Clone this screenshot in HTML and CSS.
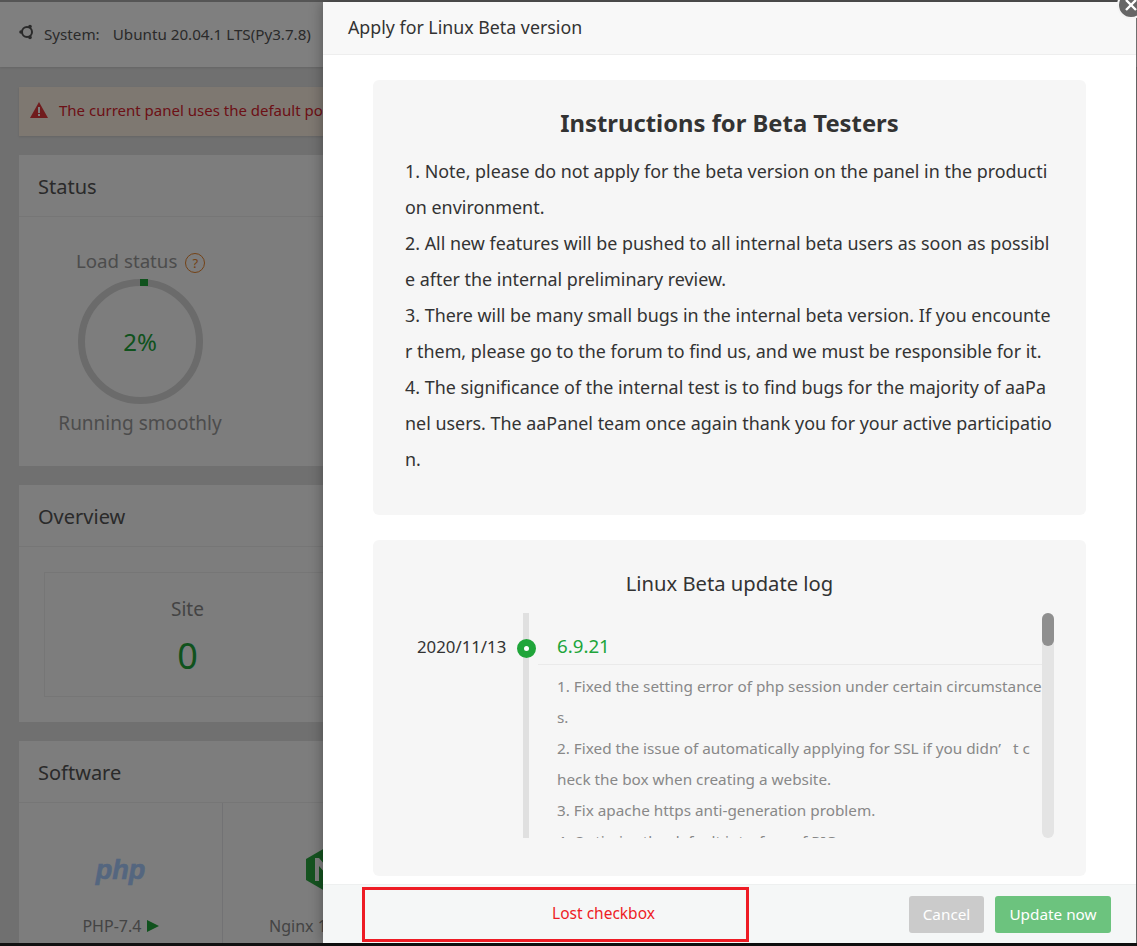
FILE: index.html
```html
<!DOCTYPE html>
<html lang="en">
<head>
    <meta charset="UTF-8">
    <meta name="viewport" content="width=device-width, initial-scale=1.0">
    <title>Apply for Linux Beta version</title>
    <link rel="stylesheet" href="styles.css">
</head>

<body>
    <div class="top-strip"></div>

    <div class="page">
        <div class="sys-bar">
            <svg class="ubuntu-icon" width="16" height="16" viewBox="0 0 16 16">
                <circle cx="8" cy="8" r="5" fill="none" stroke="#555" stroke-width="2"></circle>
                <circle cx="2" cy="8" r="1.8" fill="#555"></circle>
                <circle cx="11" cy="2.6" r="1.8" fill="#555"></circle>
                <circle cx="11" cy="13.4" r="1.8" fill="#555"></circle>
            </svg>
            <span class="sys-label">System:</span>
            <span>Ubuntu 20.04.1 LTS(Py3.7.8)</span>
        </div>

        <div class="content">
            <div class="alert">
                <svg width="18" height="16" viewBox="0 0 18 16">
                    <path d="M9 0 L18 16 L0 16 Z" fill="#e0383a"></path>
                    <rect x="8" y="5" width="2" height="6" fill="#fff"></rect>
                    <rect x="8" y="12" width="2" height="2" fill="#fff"></rect>
                </svg>
                <span>The current panel uses the default port 8888, please change it for security reasons</span>
            </div>

            <div class="card">
                <div class="card-title">Status</div>
                <div class="status-body">
                    <div class="load-col">
                        <div class="load-label">Load status <span class="help">?</span></div>
                        <div class="ring">
                            <svg width="125" height="125" viewBox="0 0 125 125">
                                <circle cx="62.5" cy="62.5" r="59" fill="none" stroke="#d6d6d6" stroke-width="7"></circle>
                                <rect x="62" y="0" width="8" height="7" fill="#20a53a"></rect>
                            </svg>
                            <span class="ring-value">2%</span>
                        </div>
                        <div class="load-state">Running smoothly</div>
                    </div>
                </div>
            </div>

            <div class="card">
                <div class="card-title">Overview</div>
                <div class="overview-body">
                    <div class="overview-box">
                        <div class="overview-name">Site</div>
                        <div class="overview-num">0</div>
                    </div>
                </div>
            </div>

            <div class="card">
                <div class="card-title">Software</div>
                <div class="soft-list">
                    <div class="soft-item">
                        <div class="soft-logo"><span class="php-logo">php</span></div>
                        <div class="soft-name">PHP-7.4 <span class="soft-run"></span></div>
                    </div>
                    <div class="soft-item">
                        <div class="soft-logo">
                            <svg width="38" height="43" viewBox="0 0 38 43">
                                <path d="M19 0 L38 11 L38 32 L19 43 L0 32 L0 11 Z" fill="#2aa640"></path>
                                <path d="M9 33 V10 H13 L26 25 V10 H30 V33 H26 L13 18 V33 Z" fill="#fff"></path>
                            </svg>
                        </div>
                        <div class="soft-name">Nginx 1.18.0 <span class="soft-run"></span></div>
                    </div>
                </div>
            </div>
        </div>

        <div class="overlay"></div>
    </div>

    <div class="bottom-strip"></div>

    <div class="modal">
        <div class="modal-title">Apply for Linux Beta version</div>

        <div class="modal-body">
            <div class="notice">
                <h2>Instructions for Beta Testers</h2>
                <p>
                    1. Note, please do not apply for the beta version on the panel in the producti<br>
                    on environment.<br>
                    2. All new features will be pushed to all internal beta users as soon as possibl<br>
                    e after the internal preliminary review.<br>
                    3. There will be many small bugs in the internal beta version. If you encounte<br>
                    r them, please go to the forum to find us, and we must be responsible for it.<br>
                    4. The significance of the internal test is to find bugs for the majority of aaPa<br>
                    nel users. The aaPanel team once again thank you for your active participatio<br>
                    n.
                </p>
            </div>

            <div class="update-log">
                <div class="log-title">Linux Beta update log</div>
                <div class="timeline">
                    <div class="log-date">2020/11/13</div>
                    <div class="log-line"><span class="log-dot"></span></div>
                    <div class="log-entry">
                        <div class="log-version">6.9.21</div>
                        <div class="log-text">
                            1. Fixed the setting error of php session under certain circumstance<br>
                            s.<br>
                            2. Fixed the issue of automatically applying for SSL if you didn’&nbsp;&nbsp; t c<br>
                            heck the box when creating a website.<br>
                            3. Fix apache https anti-generation problem.<br>
                            4. Optimize the default interface of PIC
                        </div>
                    </div>
                    <div class="log-scroll"><div class="log-thumb"></div></div>
                </div>
            </div>
        </div>

        <div class="modal-foot">
            <div class="lost-box">Lost checkbox</div>
            <div class="foot-buttons">
                <button type="button" class="btn btn-cancel">Cancel</button>
                <button type="button" class="btn btn-update">Update now</button>
            </div>
        </div>
    </div>

    <div class="modal-close">
        <svg width="12" height="12" viewBox="0 0 12 12">
            <path d="M1 1 L11 11 M11 1 L1 11" stroke="#fff" stroke-width="2.4"></path>
        </svg>
    </div>
</body>
</html>
```

FILE: styles.css
```css
body {
    font-family: "Noto Sans", Arial, sans-serif;
    margin: 0;
    width: 1137px;
    height: 946px;
    overflow: hidden;
    position: relative;
    display: flex;
    flex-direction: column;
    background-color: #000;
}

.top-strip {
    height: 2px;
    background-color: #555;
}

.bottom-strip {
    height: 3px;
    background-color: #111;
}

/* page behind the dialog */
.page {
    flex: 1;
    position: relative;
    overflow: hidden;
    background-color: #e0e0e0;
    color: #666;
}

.overlay {
    position: absolute;
    inset: 0;
    background-color: rgba(0, 0, 0, 0.5);
}

.sys-bar {
    height: 65px;
    box-sizing: border-box;
    padding-left: 19px;
    padding-bottom: 1px;
    display: flex;
    align-items: center;
    background-color: #fff;
    box-shadow: 0 1px 2px rgba(0, 0, 0, 0.1);
    font-size: 15.2px;
    color: #555;
}

.ubuntu-icon {
    margin-right: 9px;
    margin-top: -4px;
}

.sys-label {
    margin-right: 13px;
}

.content {
    padding: 20px 19px;
    width: 1099px;
}

.alert {
    height: 49px;
    box-sizing: border-box;
    padding-left: 11px;
    padding-bottom: 3px;
    margin-bottom: 19px;
    display: flex;
    align-items: center;
    gap: 11px;
    background-color: #fdf0e3;
    color: #d9232d;
    font-size: 15px;
    white-space: nowrap;
    box-shadow: 0 1px 2px rgba(0, 0, 0, 0.1);
}

.card {
    background-color: #fafafa;
    margin-bottom: 19px;
}

.card-title {
    height: 62px;
    box-sizing: border-box;
    padding-left: 19px;
    padding-top: 2px;
    display: flex;
    align-items: center;
    border-bottom: 1px solid #ececec;
    font-size: 20px;
    color: #555;
}

.status-body {
    height: 249px;
    box-sizing: border-box;
    padding-top: 32px;
}

.load-col {
    width: 242px;
    display: flex;
    flex-direction: column;
    align-items: center;
    font-size: 19px;
    color: #999;
}

.load-label {
    width: 242px;
    box-sizing: border-box;
    padding-left: 57px;
    height: 30px;
    line-height: 24px;
    font-size: 18.7px;
    white-space: nowrap;
}

.help {
    display: inline-block;
    width: 18px;
    height: 18px;
    line-height: 18px;
    border: 1px solid #e8842c;
    border-radius: 50%;
    color: #e8842c;
    font-size: 13px;
    text-align: center;
    margin-left: 3px;
}

.ring {
    width: 125px;
    height: 125px;
    position: relative;
}

.ring svg {
    display: block;
}

.ring-value {
    position: absolute;
    inset: 0;
    display: flex;
    align-items: center;
    justify-content: center;
    font-size: 24px;
    color: #20a53a;
}

.load-state {
    margin-top: 6px;
    white-space: nowrap;
}

.overview-body {
    height: 175px;
    box-sizing: border-box;
    padding: 25px;
}

.overview-box {
    width: 287px;
    height: 125px;
    box-sizing: border-box;
    border: 1px solid #ececec;
    text-align: center;
    padding-top: 23px;
}

.overview-name {
    font-size: 19px;
    color: #888;
}

.overview-num {
    font-size: 36px;
    color: #20a53a;
    margin-top: 9px;
}

.soft-list {
    display: flex;
}

.soft-item {
    width: 204px;
    height: 140px;
    box-sizing: border-box;
    border-right: 1px solid #e4e4e8;
    text-align: center;
}

.soft-logo {
    height: 100px;
    padding-top: 45px;
    box-sizing: border-box;
}

.php-logo {
    font-family: "Liberation Sans", Arial, sans-serif;
    font-size: 27px;
    font-weight: bold;
    font-style: italic;
    line-height: 45px;
    color: #a8ccff;
    -webkit-text-stroke: 0.6px #a8ccff;
}

.soft-name {
    margin-top: 12px;
    font-size: 16px;
    color: #888;
    white-space: nowrap;
}

.soft-run {
    display: inline-block;
    border-left: 12px solid #20a53a;
    border-top: 6px solid transparent;
    border-bottom: 6px solid transparent;
    margin-left: 1px;
}

/* dialog */
.modal {
    position: absolute;
    top: 2px;
    left: 323px;
    width: 813px;
    height: 941px;
    display: flex;
    flex-direction: column;
    background-color: #fff;
    box-shadow: -1px 0 12px rgba(0, 0, 0, 0.3);
}

.modal-title {
    height: 53px;
    box-sizing: border-box;
    padding-left: 25px;
    padding-bottom: 2px;
    display: flex;
    align-items: center;
    background-color: #f8f8f8;
    border-bottom: 1px solid #eee;
    font-size: 17.8px;
    color: #333;
}

.modal-body {
    flex: 1;
    padding: 25px 50px 0 50px;
    overflow: hidden;
}

.notice {
    height: 435px;
    box-sizing: border-box;
    padding: 24px 32px 0 32px;
    margin-bottom: 25px;
    background-color: #f6f6f6;
    border-radius: 6px;
    color: #333;
}

.notice h2 {
    margin: 0;
    height: 49px;
    line-height: 38px;
    font-size: 23.8px;
    font-weight: bold;
    text-align: center;
}

.notice p {
    margin: 0;
    font-size: 17.9px;
    line-height: 36px;
    white-space: nowrap;
}

.update-log {
    height: 336px;
    box-sizing: border-box;
    padding-top: 29px;
    background-color: #f6f6f6;
    border-radius: 6px;
}

.log-title {
    font-size: 20.2px;
    line-height: 28px;
    color: #333;
    text-align: center;
    margin-bottom: 16px;
}

.timeline {
    height: 225px;
    display: flex;
    margin-left: 44px;
    overflow: hidden;
}

.log-date {
    width: 106px;
    padding-top: 23px;
    line-height: 22px;
    font-size: 16.8px;
    color: #333;
}

.log-line {
    width: 6px;
    height: 225px;
    position: relative;
    background-color: #e0e0e0;
}

.log-dot {
    position: absolute;
    top: 26px;
    left: -6.5px;
    width: 5px;
    height: 5px;
    border: 7px solid #20a53a;
    border-radius: 50%;
    background-color: #fff;
}

.log-entry {
    width: 504px;
    margin-left: 9px;
}

.log-version {
    height: 52px;
    box-sizing: border-box;
    padding: 21px 0 0 19px;
    line-height: 24px;
    border-bottom: 1px solid #eaeaea;
    font-size: 18.7px;
    color: #20a53a;
}

.log-text {
    padding: 6px 0 0 19px;
    font-size: 15.3px;
    line-height: 31px;
    color: #888;
    white-space: nowrap;
}

.log-scroll {
    width: 12px;
    height: 225px;
    border-radius: 6px;
    background-color: #e4e4e4;
}

.log-thumb {
    height: 33px;
    border-radius: 6px;
    background-color: #8f8f8f;
}

.modal-foot {
    height: 59px;
    box-sizing: border-box;
    border-top: 1px solid #eef0f0;
    background-color: #f5f7f7;
    display: flex;
    align-items: center;
    justify-content: space-between;
    padding-left: 39px;
    padding-right: 25px;
}

.lost-box {
    width: 387px;
    height: 55px;
    box-sizing: border-box;
    border: 3px solid #ee1c25;
    padding-left: 96px;
    padding-bottom: 2px;
    display: flex;
    align-items: center;
    justify-content: center;
    font-size: 15.5px;
    color: #ee1c25;
}

.foot-buttons {
    display: flex;
    gap: 11px;
}

.btn {
    height: 37px;
    border: none;
    border-radius: 3px;
    color: #fff;
    font-family: inherit;
    font-size: 15.3px;
    padding: 0;
}

.btn-cancel {
    width: 75px;
    background-color: #cbcbcb;
}

.btn-update {
    width: 116px;
    background-color: #6cc37e;
}

.modal-close {
    position: absolute;
    top: -9px;
    left: 1117px;
    width: 28px;
    height: 28px;
    box-sizing: border-box;
    border: 2px solid #f4f4f4;
    border-radius: 50%;
    background-color: #666;
    display: flex;
    align-items: center;
    justify-content: center;
}
```
